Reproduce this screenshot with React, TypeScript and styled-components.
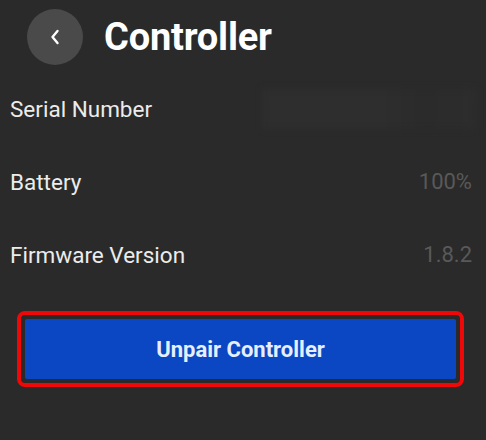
import React from "react";
import styled, { createGlobalStyle } from "styled-components";

const GlobalStyle = createGlobalStyle`
  html, body {
    margin: 0;
    padding: 0;
    background: #2a2a2a;
  }
  body {
    font-family: Roboto, "Liberation Sans", sans-serif;
  }
`;

const Screen = styled.div`
  width: 486px;
  height: 440px;
  background: #2a2a2a;
  box-sizing: border-box;
  padding: 9px 14px 0 10px;
  display: flex;
  flex-direction: column;
  overflow: hidden;
`;

const Header = styled.div`
  display: flex;
  align-items: center;
  gap: 21px;
  padding-left: 17px;
  height: 56px;
`;

const BackButton = styled.button`
  width: 56px;
  height: 56px;
  border-radius: 50%;
  border: none;
  background: #4a4a4a;
  display: flex;
  align-items: center;
  justify-content: center;
  padding: 0;
  cursor: pointer;
`;

const Title = styled.h1`
  margin: 0;
  color: #ffffff;
  font-size: 38px;
  font-weight: 700;
  letter-spacing: -0.2px;
`;

const InfoList = styled.div`
  display: flex;
  flex-direction: column;
  margin-top: 7px;
`;

const Row = styled.div`
  height: 73px;
  display: flex;
  align-items: center;
  justify-content: space-between;
`;

const Label = styled.span`
  color: #ececec;
  font-size: 22.5px;
`;

const Value = styled.span`
  color: #595959;
  font-size: 22px;
`;

const Redacted = styled.div`
  width: 214px;
  height: 40px;
  margin-right: -4px;
  background: linear-gradient(90deg, #2e2e2e 0%, #2e2e2e 55%, #2b2b2b 75%, #2d2d2d 100%);
  filter: blur(3px);
`;

const Highlight = styled.div`
  margin: 20px 0 0 7px;
  width: 447px;
  height: 76px;
  box-sizing: border-box;
  border: 4px solid #f00808;
  border-radius: 8px;
  padding: 4px;
  display: flex;
`;

const PrimaryButton = styled.button`
  flex: 1;
  border: none;
  border-radius: 2px;
  background: #0b47c2;
  color: #e6efff;
  font-family: Roboto, "Liberation Sans", sans-serif;
  font-size: 22px;
  font-weight: 700;
  cursor: pointer;
`;

const rows = [
  { label: "Serial Number", value: null },
  { label: "Battery", value: "100%" },
  { label: "Firmware Version", value: "1.8.2" },
];

export default function App() {
  return (
    <>
      <GlobalStyle />
      <Screen>
        <Header>
          <BackButton aria-label="Back">
            <svg width="10" height="16" viewBox="0 0 10 16">
              <path
                d="M7.5 2 L2.5 8 L7.5 14"
                fill="none"
                stroke="#ffffff"
                strokeWidth="2.4"
                strokeLinecap="round"
                strokeLinejoin="round"
              />
            </svg>
          </BackButton>
          <Title>Controller</Title>
        </Header>
        <InfoList>
          {rows.map((r) => (
            <Row key={r.label}>
              <Label>{r.label}</Label>
              {r.value ? <Value>{r.value}</Value> : <Redacted />}
            </Row>
          ))}
        </InfoList>
        <Highlight>
          <PrimaryButton>Unpair Controller</PrimaryButton>
        </Highlight>
      </Screen>
    </>
  );
}
